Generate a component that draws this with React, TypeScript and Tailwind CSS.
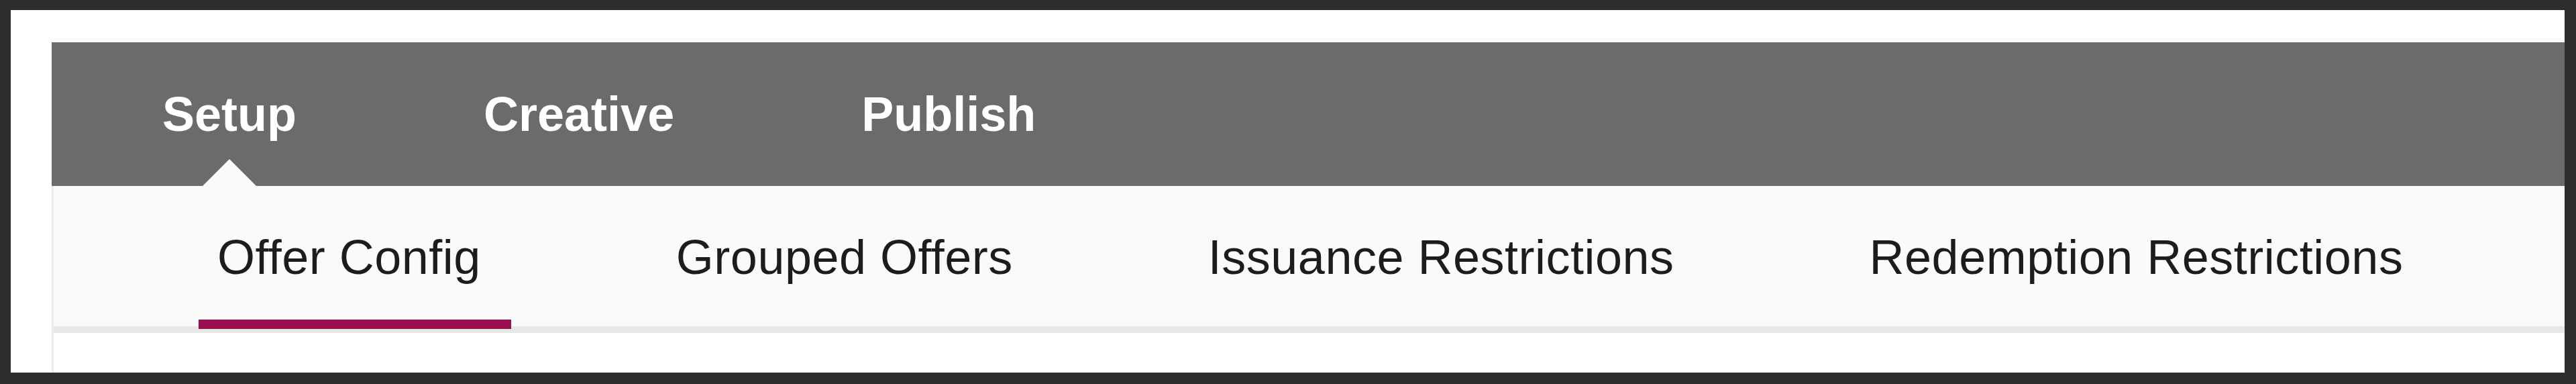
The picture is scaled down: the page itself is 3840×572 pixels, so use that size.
import React from "react";

const steps = ["Setup", "Creative", "Publish"];
const tabs = ["Offer Config", "Grouped Offers", "Issuance Restrictions", "Redemption Restrictions"];

export default function App() {
  const activeStep = 0;
  const activeTab = 0;

  return (
    <div className="flex h-[572px] w-[3840px] bg-[#2e2d2b] pt-[15px] pr-[17px] pb-[17px] pl-[16px] font-['Liberation_Sans',Arial,sans-serif]">
      <div className="flex flex-1 flex-col bg-white pt-[48px] pl-[61px]">
        {/* step bar */}
        <nav className="flex h-[214px] gap-[279px] bg-[#6b6b6b] pl-[165px] text-[72px] leading-none font-bold text-white">
          {steps.map((step, i) => (
            <div key={step} className="relative flex items-center">
              <span>{step}</span>
              {i === activeStep && (
                <span className="absolute bottom-0 left-1/2 h-0 w-0 -translate-x-1/2 border-x-[40px] border-b-[40px] border-x-transparent border-b-[#fafafa]" />
              )}
            </div>
          ))}
        </nav>

        {/* sub tabs + content */}
        <div className="flex flex-1 flex-col border-l-[3px] border-[#ececec]">
          <div className="flex h-[219px] gap-[235px] border-b-[10px] border-[#e7e7e7] bg-[#fafafa] pl-[216px] text-[72px] leading-none tracking-[0.5px] text-[#1c1c1c]">
            {tabs.map((tab, i) => (
              <div key={tab} className="relative px-[28px] pt-[70px]">
                <span>{tab}</span>
                {i === activeTab && (
                  <span className="absolute right-[-17px] bottom-[-4px] left-0 h-[14px] bg-[#98104f]" />
                )}
              </div>
            ))}
          </div>
          <div className="flex-1 bg-white" />
        </div>
      </div>
    </div>
  );
}
